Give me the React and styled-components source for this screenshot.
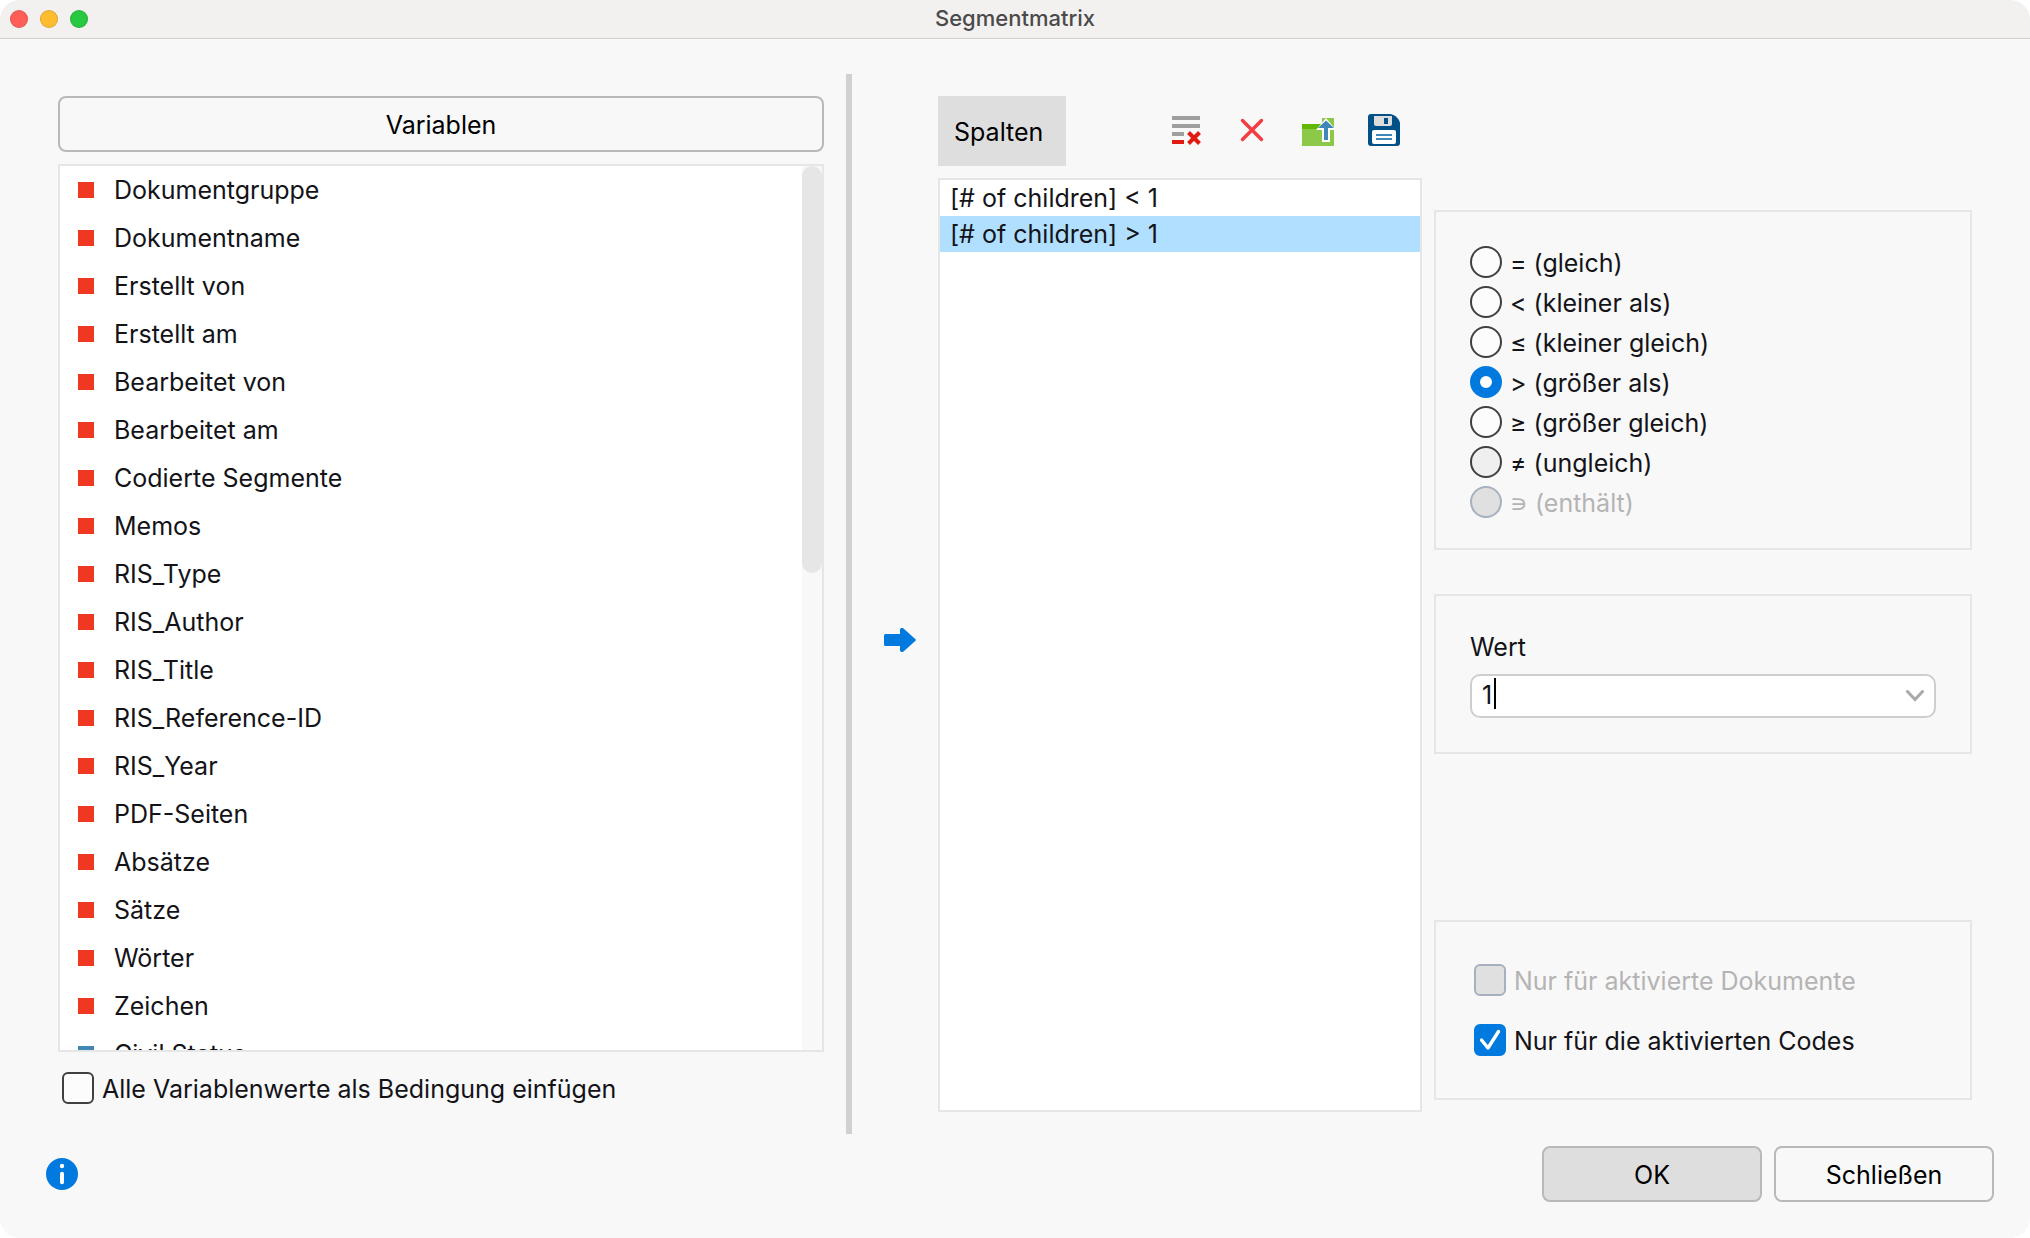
import React, { useState } from "react";
import styled, { createGlobalStyle } from "styled-components";

// Theme Colors
const themeColors = {
  window: "#f8f8f8",
  titleBar: "#f3f1f0",
  line: "#e6e6e6",
  border: "#b9b9b9",
  pressed: "#dedede",
  accent: "#007adf",
  selection: "#b0dfff",
  text: "#131318",
  disabled: "#b4b4b4",
  red: "#f03721",
  blue: "#3e87b8",
};

const GlobalStyle = createGlobalStyle`
  * {
    box-sizing: border-box;
  }

  body {
    margin: 0;
    background: #fff;
  }

  button, input {
    font: inherit;
    color: inherit;
  }
`;

const Window = styled.div`
  display: flex;
  flex-direction: column;
  height: 100vh;
  overflow: hidden;
  border-radius: 20px;
  background: ${themeColors.window};
  color: ${themeColors.text};
  font-family: Inter, "Liberation Sans", "DejaVu Sans", sans-serif;
  font-size: 25px;
  line-height: 36px;
`;

const TitleBar = styled.header`
  display: grid;
  grid-template-columns: 1fr auto 1fr;
  align-items: center;
  height: 39px;
  padding: 0 10px;
  background: ${themeColors.titleBar};
  border-bottom: 1px solid #d0cfcf;
`;

const Lights = styled.div`
  display: flex;
  gap: 12px;
`;

const Light = styled.button`
  width: 18px;
  height: 18px;
  padding: 0;
  border: 1px solid rgba(0, 0, 0, 0.12);
  border-radius: 50%;
  background: ${(props) => props.$color};
`;

const Title = styled.h1`
  margin: 0;
  padding-bottom: 2px;
  color: #4b4a4a;
  font-size: 22px;
  font-weight: 500;
  line-height: 36px;
`;

const Main = styled.main`
  flex: 1;
  min-height: 0;
  display: grid;
  grid-template-columns: minmax(0, 766fr) 28px 86px minmax(0, 484fr) 12px minmax(0, 538fr);
  grid-template-rows: minmax(0, 1fr);
  padding: 35px 58px 0;
`;

const VariablesColumn = styled.section`
  display: flex;
  flex-direction: column;
  padding: 22px 0 30px;
`;

const Button = styled.button`
  height: 56px;
  min-width: 220px;
  padding: 2px 16px 0;
  border: 2px solid ${themeColors.border};
  border-radius: 8px;
  background: ${(props) => (props.$primary ? themeColors.pressed : themeColors.window)};
  color: #000;
`;

const VariablesBox = styled.div`
  flex: 1;
  min-height: 0;
  display: flex;
  margin: 12px 0 20px;
  border: 2px solid ${themeColors.line};
  background: #fff;
`;

const VariableList = styled.ul`
  flex: 1;
  margin: 0;
  padding: 0;
  overflow-y: auto;
  scrollbar-width: none;
  list-style: none;
`;

const Variable = styled.li`
  display: flex;
  align-items: center;
  gap: 20px;
  height: 48px;
  padding-left: 18px;

  &::before {
    content: "";
    width: 16px;
    height: 16px;
    background: ${(props) => (props.$custom ? themeColors.blue : themeColors.red)};
  }
`;

const ScrollTrack = styled.div`
  width: 20px;
  background: ${themeColors.window};
`;

const ScrollThumb = styled.div`
  height: 46%;
  border-radius: 10px;
  background: ${themeColors.line};
`;

const Divider = styled.div`
  width: 6px;
  justify-self: end;
  background: #d1d1d1;
`;

const TransferCell = styled.div`
  display: flex;
  align-items: center;
  justify-content: flex-end;
  padding: 72px 22px 0 0;
`;

const IconButton = styled.button`
  display: flex;
  padding: 0;
  border: 0;
  background: none;
`;

const ColumnsColumn = styled.section`
  display: flex;
  flex-direction: column;
  gap: 12px;
  padding: 22px 0;
`;

const Toolbar = styled.div`
  display: flex;
  justify-content: space-between;
  align-items: stretch;
  height: 70px;
`;

const Tab = styled.button`
  width: 128px;
  padding: 2px 16px 0;
  border: 0;
  background: ${themeColors.pressed};
  color: #000;
  text-align: left;
`;

const ToolbarIcons = styled.div`
  display: flex;
  gap: 34px;
  align-items: center;
  padding: 0 22px 2px 0;
`;

const ConditionList = styled.ul`
  flex: 1;
  margin: 0;
  padding: 0;
  border: 2px solid ${themeColors.line};
  background: #fff;
  list-style: none;
`;

const Condition = styled.li`
  height: 36px;
  padding-left: 10px;
  background: ${(props) => (props.$selected ? themeColors.selection : "transparent")};
`;

const SettingsColumn = styled.section`
  grid-column: 6;
  display: flex;
  flex-direction: column;
  padding: 136px 0 34px;
`;

const Group = styled.div`
  display: flex;
  flex-direction: column;
  border: 2px solid ${themeColors.line};
`;

const OperatorGroup = styled(Group)`
  padding: 30px 34px 26px;
`;

const ValueGroup = styled(Group)`
  gap: 9px;
  margin-top: 44px;
  padding: 33px 34px 34px;
`;

const ActivationGroup = styled(Group)`
  gap: 28px;
  margin-top: auto;
  padding: 42px 38px;
`;

const Option = styled.label`
  display: flex;
  align-items: center;
  gap: 8px;
  height: ${(props) => (props.$tall ? "40px" : "32px")};
  padding-left: ${(props) => (props.$indent ? "4px" : "0")};
  color: ${(props) => (props.$disabled ? themeColors.disabled : "inherit")};
`;

const OptionText = styled.span`
  padding-top: 2px;
`;

const Radio = styled.input`
  appearance: none;
  width: 32px;
  height: 32px;
  margin: 0;
  border: 2px solid #404040;
  border-radius: 50%;
  background: ${(props) => (props.$hovered ? "#efefef" : "#fcfcfc")};

  &:checked {
    border: 10px solid ${themeColors.accent};
    background: #fff;
  }

  &:disabled {
    border-color: #a7b0bf;
    background: #e0e0e0;
  }
`;

const CheckBox = styled.span`
  position: relative;
  display: flex;

  svg {
    position: absolute;
    inset: 0;
    pointer-events: none;
  }
`;

const CheckInput = styled.input`
  appearance: none;
  width: 32px;
  height: 32px;
  margin: 0;
  border: 2px solid #404040;
  border-radius: 6px;
  background: #fcfcfc;

  &:checked {
    border-color: ${themeColors.accent};
    background: ${themeColors.accent};
  }

  &:disabled {
    border-color: #a7b0bf;
    background: #e0e0e0;
  }
`;

const Combo = styled.div`
  position: relative;
  display: flex;
  align-items: center;
  height: 44px;
  padding-right: 10px;
  border: 2px solid #cecece;
  border-radius: 10px;
  background: #fff;
`;

const ComboInput = styled.input`
  flex: 1;
  min-width: 0;
  height: 40px;
  padding: 0 10px 3px;
  border: 0;
  outline: 0;
  background: none;
  caret-color: transparent;
`;

const Caret = styled.span`
  position: absolute;
  top: 2px;
  left: 22px;
  width: 2px;
  height: 31px;
  background: #000;
`;

const Footer = styled.footer`
  display: flex;
  align-items: center;
  gap: 12px;
  padding: 12px 36px 36px 46px;
`;

const InfoButton = styled(IconButton)`
  margin-right: auto;
`;

const RemoveAllIcon = () => (
  <svg width="32" height="32" viewBox="0 0 32 32">
    <path d="M2 2h28v4H2zM2 10h28v4H2zM2 18h12v4H2z" fill="#9e9e9e" />
    <path d="M2 26h12v4H2z" fill="#e11a12" />
    <path d="M18.5 18.5l11 11m0-11l-11 11" stroke="#e11a12" strokeWidth="4" />
  </svg>
);

const RemoveIcon = () => (
  <svg width="32" height="32" viewBox="0 0 32 32">
    <path d="M6.5 6.5l19 19m0-19l-19 19" stroke="#f43b42" strokeWidth="3.4" strokeLinecap="round" />
  </svg>
);

const OpenIcon = () => (
  <svg width="32" height="32" viewBox="0 0 32 32">
    <path d="M20 4h12v28H0V14h20z" fill="#8dc948" />
    <path d="M0 10h19v5H0z" fill="#61b800" />
    <path d="M24 4L34 16h-6v12h-8V16h-6z" fill="#fff" />
    <path d="M24 6.5L32 14h-6v12h-4V14h-6z" fill="#3e87b8" />
  </svg>
);

const SaveIcon = () => (
  <svg width="32" height="32" viewBox="0 0 32 32">
    <path d="M3 0h19c6 1 9 5 10 9v20a3 3 0 0 1-3 3H3a3 3 0 0 1-3-3V3a3 3 0 0 1 3-3z" fill="#015088" />
    <path d="M6 2h18v8a2 2 0 0 1-2 2H8a2 2 0 0 1-2-2z" fill="#dcdcdc" />
    <path d="M16 4h4v6h-4z" fill="#015088" />
    <path d="M6 16h20a2 2 0 0 1 2 2v10a2 2 0 0 1-2 2H6a2 2 0 0 1-2-2V18a2 2 0 0 1 2-2z" fill="#fff" />
    <path d="M8 20h16v2H8zM8 24h16v2H8z" fill="#3e87b8" />
  </svg>
);

const ArrowIcon = () => (
  <svg width="32" height="24" viewBox="0 0 32 24">
    <path
      d="M1.5 6H16V1.5C16 .3 18 -.5 19.5 .6L31.5 11.3a1 1 0 0 1 0 1.400L19.5 23.4C18 24.5 16 23.7 16 22.5V18H1.5A1.5 1.5 0 0 1 0 16.5v-9A1.5 1.5 0 0 1 1.5 6z"
      fill={themeColors.accent}
    />
  </svg>
);

const ChevronIcon = () => (
  <svg width="18" height="12" viewBox="0 0 18 12">
    <path d="M1.5 1.5L9 9.5l7.5-8" fill="none" stroke="#a9a9a9" strokeWidth="3" strokeLinecap="round" />
  </svg>
);

const TickIcon = () => (
  <svg width="32" height="32" viewBox="0 0 32 32">
    <path
      d="M7.5 16l6.5 8L24.5 7.5"
      fill="none"
      stroke="#fff"
      strokeWidth="3.4"
      strokeLinecap="round"
      strokeLinejoin="round"
    />
  </svg>
);

const InfoIcon = () => (
  <svg width="32" height="32" viewBox="0 0 32 32">
    <circle cx="16" cy="16" r="16" fill={themeColors.accent} />
    <circle cx="16" cy="8" r="2.2" fill="#fff" />
    <path d="M16 15.800v8.400" stroke="#fff" strokeWidth="4" strokeLinecap="round" />
  </svg>
);

const Check = ({ label, checked, disabled, indent, onChange }) => (
  <Option $disabled={disabled} $indent={indent}>
    <CheckBox>
      <CheckInput type="checkbox" checked={checked} disabled={disabled} onChange={onChange} />
      {checked ? <TickIcon /> : null}
    </CheckBox>
    <OptionText>{label}</OptionText>
  </Option>
);

const variables = [
  "Dokumentgruppe",
  "Dokumentname",
  "Erstellt von",
  "Erstellt am",
  "Bearbeitet von",
  "Bearbeitet am",
  "Codierte Segmente",
  "Memos",
  "RIS_Type",
  "RIS_Author",
  "RIS_Title",
  "RIS_Reference-ID",
  "RIS_Year",
  "PDF-Seiten",
  "Absätze",
  "Sätze",
  "Wörter",
  "Zeichen",
];

const customVariables = ["Civil Status"];

const conditions = ["[# of children] < 1", "[# of children] > 1"];

const operators = [
  { text: "= (gleich)" },
  { text: "< (kleiner als)" },
  { text: "≤ (kleiner gleich)" },
  { text: "> (größer als)" },
  { text: "≥ (größer gleich)" },
  { text: "≠ (ungleich)", hovered: true },
  { text: "∍ (enthält)", disabled: true },
];

const App = () => {
  const [selected, setSelected] = useState(1);
  const [operator, setOperator] = useState(3);
  const [value, setValue] = useState("1");
  const [allValues, setAllValues] = useState(false);
  const [activeCodes, setActiveCodes] = useState(true);

  return (
    <Window>
      <GlobalStyle />
      <TitleBar>
        <Lights>
          <Light $color="#ff5f57" aria-label="Fenster schließen" />
          <Light $color="#febc2e" aria-label="Minimieren" />
          <Light $color="#28c840" aria-label="Vergrößern" />
        </Lights>
        <Title>Segmentmatrix</Title>
      </TitleBar>

      <Main>
        <VariablesColumn>
          <Button>Variablen</Button>
          <VariablesBox>
            <VariableList>
              {variables.map((name) => (
                <Variable key={name}>{name}</Variable>
              ))}
              {customVariables.map((name) => (
                <Variable key={name} $custom>
                  {name}
                </Variable>
              ))}
            </VariableList>
            <ScrollTrack>
              <ScrollThumb />
            </ScrollTrack>
          </VariablesBox>
          <Check
            label="Alle Variablenwerte als Bedingung einfügen"
            checked={allValues}
            indent
            onChange={() => setAllValues(!allValues)}
          />
        </VariablesColumn>

        <Divider />

        <TransferCell>
          <IconButton aria-label="Einfügen">
            <ArrowIcon />
          </IconButton>
        </TransferCell>

        <ColumnsColumn>
          <Toolbar>
            <Tab>Spalten</Tab>
            <ToolbarIcons>
              <IconButton aria-label="Alle entfernen">
                <RemoveAllIcon />
              </IconButton>
              <IconButton aria-label="Entfernen">
                <RemoveIcon />
              </IconButton>
              <IconButton aria-label="Öffnen">
                <OpenIcon />
              </IconButton>
              <IconButton aria-label="Speichern">
                <SaveIcon />
              </IconButton>
            </ToolbarIcons>
          </Toolbar>
          <ConditionList>
            {conditions.map((text, i) => (
              <Condition key={text} $selected={i === selected} onClick={() => setSelected(i)}>
                {text}
              </Condition>
            ))}
          </ConditionList>
        </ColumnsColumn>

        <SettingsColumn>
          <OperatorGroup role="radiogroup">
            {operators.map(({ text, hovered, disabled }, i) => (
              <Option key={text} $tall $disabled={disabled}>
                <Radio
                  type="radio"
                  name="operator"
                  checked={i === operator}
                  disabled={disabled}
                  $hovered={hovered}
                  onChange={() => setOperator(i)}
                />
                <OptionText>{text}</OptionText>
              </Option>
            ))}
          </OperatorGroup>

          <ValueGroup>
            <label htmlFor="value">Wert</label>
            <Combo>
              <ComboInput id="value" type="text" value={value} onChange={(e) => setValue(e.target.value)} />
              <Caret />
              <IconButton aria-label="Werte anzeigen">
                <ChevronIcon />
              </IconButton>
            </Combo>
          </ValueGroup>

          <ActivationGroup>
            <Check label="Nur für aktivierte Dokumente" checked={false} disabled />
            <Check
              label="Nur für die aktivierten Codes"
              checked={activeCodes}
              onChange={() => setActiveCodes(!activeCodes)}
            />
          </ActivationGroup>
        </SettingsColumn>
      </Main>

      <Footer>
        <InfoButton aria-label="Info">
          <InfoIcon />
        </InfoButton>
        <Button $primary>OK</Button>
        <Button>Schließen</Button>
      </Footer>
    </Window>
  );
};

export default App;
